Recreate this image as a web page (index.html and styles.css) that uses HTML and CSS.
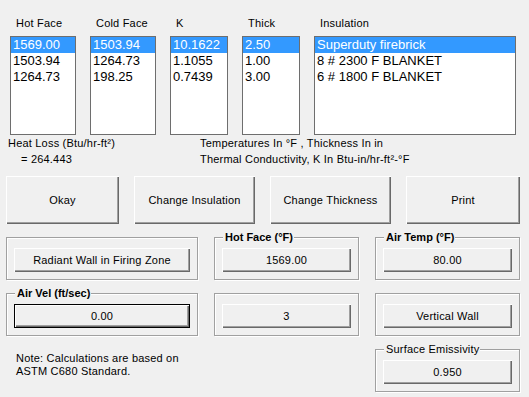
FILE: index.html
```html
<!DOCTYPE html>
<html>
<head>
<meta charset="utf-8">
<link rel="stylesheet" href="styles.css">
</head>
<body>
<div class="app">
  <div class="lists">
    <div class="col w65">
      <div class="hdr">Hot Face</div>
      <div class="listbox">
        <div class="item sel">1569.00</div>
        <div class="item">1503.94</div>
        <div class="item">1264.73</div>
      </div>
    </div>
    <div class="col w65">
      <div class="hdr">Cold Face</div>
      <div class="listbox">
        <div class="item sel">1503.94</div>
        <div class="item">1264.73</div>
        <div class="item">198.25</div>
      </div>
    </div>
    <div class="col w57">
      <div class="hdr">K</div>
      <div class="listbox">
        <div class="item sel">10.1622</div>
        <div class="item">1.1055</div>
        <div class="item">0.7439</div>
      </div>
    </div>
    <div class="col w57">
      <div class="hdr">Thick</div>
      <div class="listbox">
        <div class="item sel">2.50</div>
        <div class="item">1.00</div>
        <div class="item">3.00</div>
      </div>
    </div>
    <div class="col w202">
      <div class="hdr">Insulation</div>
      <div class="listbox">
        <div class="item sel">Superduty firebrick</div>
        <div class="item">8 # 2300 F BLANKET</div>
        <div class="item">6 # 1800 F BLANKET</div>
      </div>
    </div>
  </div>

  <div class="info">
    <div class="info-left">
      <div>Heat Loss (Btu/hr-ft²)</div>
      <div class="indent">= 264.443</div>
    </div>
    <div class="info-right">
      <div>Temperatures In °F , Thickness In in</div>
      <div>Thermal Conductivity, K In Btu-in/hr-ft²-°F</div>
    </div>
  </div>

  <div class="actions">
    <div class="btn big b113">Okay</div>
    <div class="btn big b121">Change Insulation</div>
    <div class="btn big b121">Change Thickness</div>
    <div class="btn big b114">Print</div>
  </div>

  <div class="groups">
    <div class="group">
      <div class="btn inner">Radiant Wall in Firing Zone</div>
    </div>
    <div class="group">
      <span class="legend bold">Hot Face (°F)</span>
      <div class="btn inner">1569.00</div>
    </div>
    <div class="group">
      <span class="legend bold">Air Temp (°F)</span>
      <div class="btn inner">80.00</div>
    </div>
    <div class="group">
      <span class="legend bold">Air Vel (ft/sec)</span>
      <div class="btn inner focus">0.00</div>
    </div>
    <div class="group">
      <div class="btn inner">3</div>
    </div>
    <div class="group">
      <div class="btn inner">Vertical Wall</div>
    </div>
    <div class="note">
      <div>Note: Calculations are based on</div>
      <div>ASTM C680 Standard.</div>
    </div>
    <div class="empty"></div>
    <div class="group">
      <span class="legend">Surface Emissivity</span>
      <div class="btn inner">0.950</div>
    </div>
  </div>
</div>
</body>
</html>
```

FILE: styles.css
```css
html, body {
  margin: 0;
  padding: 0;
  background: #f0f0f0;
}
body {
  font-family: "Liberation Sans", Arial, sans-serif;
  font-size: 11px;
  letter-spacing: 0.2px;
  color: #000;
  width: 529px;
  height: 397px;
  overflow: hidden;
}
.app {
  display: flex;
  flex-direction: column;
}

/* list boxes */
.lists {
  display: flex;
  gap: 14px;
  padding: 16px 0 0 10px;
}
.col {
  display: flex;
  flex-direction: column;
}
.w65 { width: 66px; }
.w57 { width: 58px; }
.w202 { width: 202px; }
.hdr {
  height: 14px;
  line-height: 14px;
  padding-left: 6px;
  margin-bottom: 6px;
  white-space: nowrap;
}
.listbox {
  box-sizing: border-box;
  height: 99px;
  border: 1px solid #6e6e6e;
  background: #fff;
  overflow: hidden;
}
.item {
  height: 16px;
  line-height: 16px;
  font-size: 13px;
  letter-spacing: 0;
  padding-left: 2px;
  white-space: nowrap;
}
.item.sel {
  background: #3399ff;
  color: #fff;
}

/* info text */
.info {
  display: flex;
  line-height: 16px;
}
.info-left {
  width: 192px;
  padding-left: 8px;
}
.indent {
  padding-left: 13px;
}
.info-right {
  white-space: nowrap;
}

/* buttons */
.btn {
  box-sizing: border-box;
  display: flex;
  align-items: center;
  justify-content: center;
  background: #f0f0f0;
  box-shadow: inset 1px 1px 0 #fff, inset -1px -1px 0 #696969, inset -2px -2px 0 #a0a0a0;
  white-space: nowrap;
  color: #000;
}
.actions {
  display: flex;
  gap: 15px;
  padding-left: 6px;
  margin-top: 9px;
}
.big { height: 48px; }
.b113 { width: 113px; }
.b121 { width: 121px; }
.b114 { width: 114px; }

/* group boxes */
.groups {
  display: grid;
  grid-template-columns: 192px 145px 145px;
  grid-template-rows: 43px 43px 43px;
  column-gap: 16px;
  row-gap: 13px;
  padding-left: 6px;
  margin-top: 13px;
}
.group {
  position: relative;
  box-sizing: border-box;
  border: 1px solid #a0a0a0;
  box-shadow: 1px 1px 0 #fff, inset 1px 1px 0 #fff;
  padding: 10px 7px 7px 7px;
  display: flex;
  flex-direction: column;
}
.legend {
  position: absolute;
  top: -8px;
  left: 8px;
  padding: 0 1px 0 2px;
  background: #f0f0f0;
  line-height: 14px;
  white-space: nowrap;
}
.bold { font-weight: bold; letter-spacing: 0; }
.inner {
  height: 24px;
  flex: none;
}
.inner.focus {
  border: 1px solid #000;
}
.note {
  padding: 3px 0 0 10px;
  line-height: 13px;
}
```
